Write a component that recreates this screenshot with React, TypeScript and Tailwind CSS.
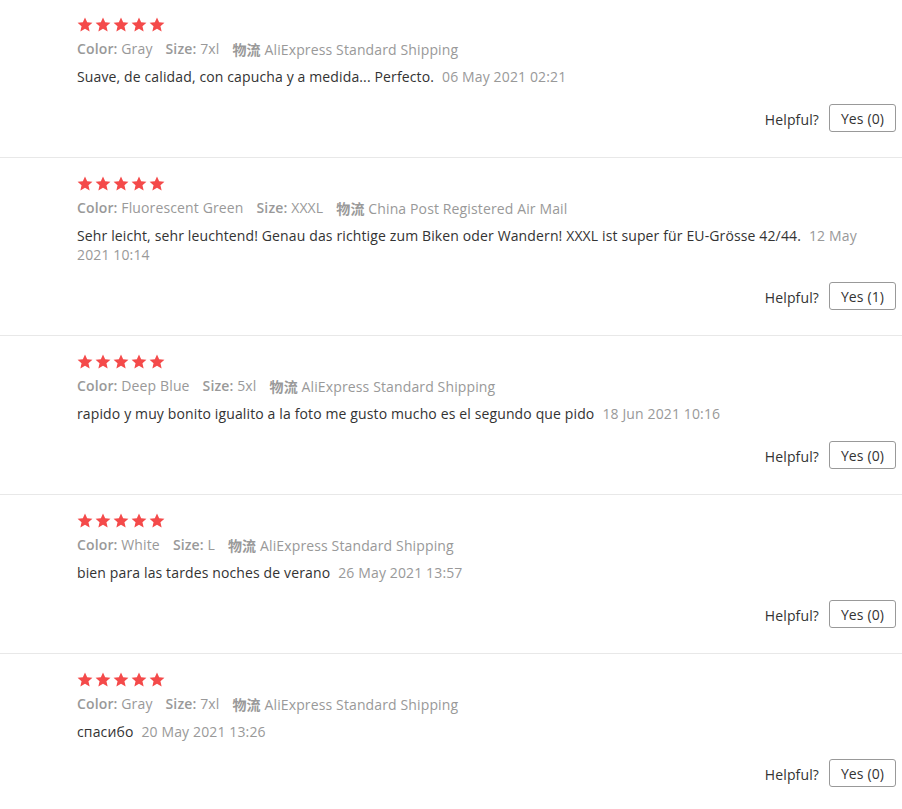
import React from 'react';

type Review = {
  color: string;
  size: string;
  shipping: string;
  text: string;
  date: string;
  helpful: number;
};

const reviews: Review[] = [
  {
    color: 'Gray',
    size: '7xl',
    shipping: 'AliExpress Standard Shipping',
    text: 'Suave, de calidad, con capucha y a medida... Perfecto.',
    date: '06 May 2021 02:21',
    helpful: 0,
  },
  {
    color: 'Fluorescent Green',
    size: 'XXXL',
    shipping: 'China Post Registered Air Mail',
    text: 'Sehr leicht, sehr leuchtend! Genau das richtige zum Biken oder Wandern! XXXL ist super für EU-Grösse 42/44.',
    date: '12 May 2021 10:14',
    helpful: 1,
  },
  {
    color: 'Deep Blue',
    size: '5xl',
    shipping: 'AliExpress Standard Shipping',
    text: 'rapido y muy bonito igualito a la foto me gusto mucho es el segundo que pido',
    date: '18 Jun 2021 10:16',
    helpful: 0,
  },
  {
    color: 'White',
    size: 'L',
    shipping: 'AliExpress Standard Shipping',
    text: 'bien para las tardes noches de verano',
    date: '26 May 2021 13:57',
    helpful: 0,
  },
  {
    color: 'Gray',
    size: '7xl',
    shipping: 'AliExpress Standard Shipping',
    text: 'спасибо',
    date: '20 May 2021 13:26',
    helpful: 0,
  },
];

function Star() {
  return (
    <svg width="16" height="15" viewBox="0 0 24 23" className="block">
      <path
        fill="#f44a4a"
        d="M12 0.6l3.3 7.4 8.1 0.8-6.1 5.4 1.8 7.9L12 18l-7.1 4.1 1.8-7.9L0.6 8.8l8.1-0.8z"
      />
    </svg>
  );
}

function ReviewItem({ r }: { r: Review }) {
  return (
    <div className="border-b border-[#e8e8e8] pl-[77px] pr-[6px] pt-[18px] pb-[25px]">
      {/* rating */}
      <div className="flex gap-[2px] h-[15px]">
        {[0, 1, 2, 3, 4].map((i) => (
          <Star key={i} />
        ))}
      </div>

      {/* sku info */}
      <div className="mt-[7px] flex gap-[13px] text-[14px] leading-[20px] text-[#999]">
        <span>
          <span className="font-semibold">Color:</span> {r.color}
        </span>
        <span>
          <span className="font-semibold">Size:</span> {r.size}
        </span>
        <span>
          <span className="font-semibold font-['Noto_Sans_CJK_SC',sans-serif]">物流</span> {r.shipping}
        </span>
      </div>

      {/* buyer feedback */}
      <p className="mt-[7px] mr-[30px] text-[14px] leading-[19px] text-[#333]">
        {r.text}
        <span className="ml-[8px] text-[#999]">{r.date}</span>
      </p>

      {/* helpful */}
      <div className="mt-[18px] flex items-center justify-end gap-[10px] text-[14px] text-[#333]">
        <span className="pt-[3px]">Helpful?</span>
        <button className="h-[28px] w-[67px] rounded-[3px] border border-[#999] bg-white text-[14px] text-[#333]">
          Yes ({r.helpful})
        </button>
      </div>
    </div>
  );
}

export default function App() {
  return (
    <div className="w-[902px] -mt-[1px] bg-white tracking-[0.13px] font-['Open_Sans','Noto_Sans_CJK_SC',sans-serif]">
      {reviews.map((r, i) => (
        <ReviewItem key={i} r={r} />
      ))}
    </div>
  );
}
